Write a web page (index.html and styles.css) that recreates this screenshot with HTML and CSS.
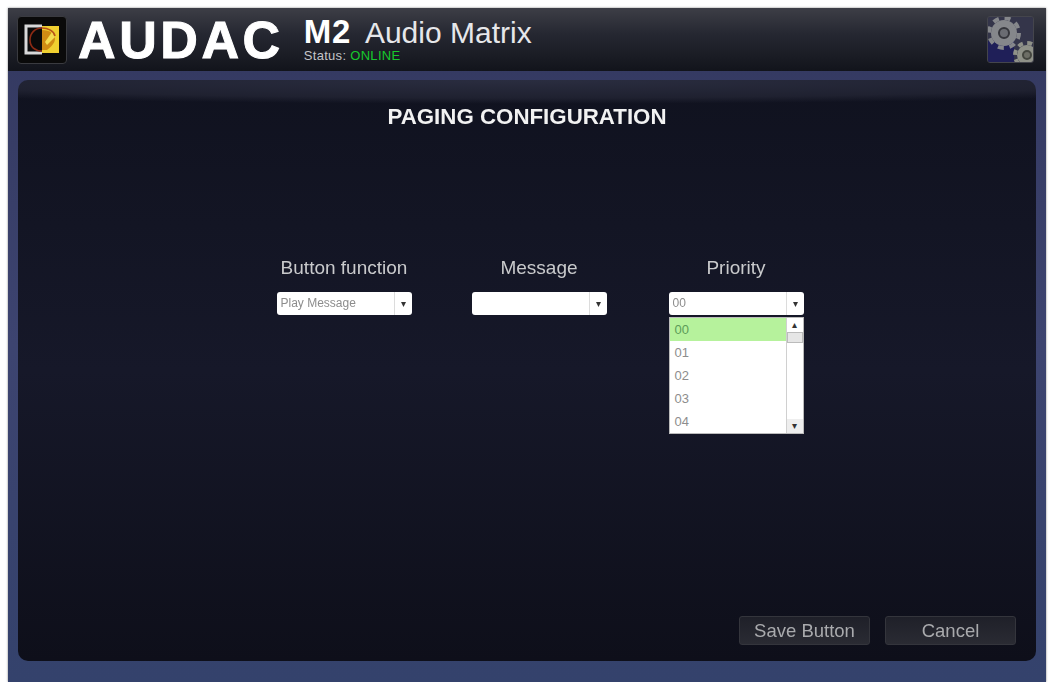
FILE: index.html
```html
<!DOCTYPE html>
<html lang="en">
<head>
  <meta charset="UTF-8" />
  <title>AUDAC M2 Audio Matrix</title>
  <link rel="stylesheet" href="styles.css">
</head>
<body>
  <div class="app">
    <header class="topbar">
      <div class="logo-box">
        <svg width="38" height="34" viewBox="0 0 38 34">
          <path d="M19 3H3v27h16" fill="none" stroke="#d8d8d8" stroke-width="3"/>
          <rect x="19" y="3" width="17" height="27" fill="#f0d030"/>
          <path d="M19 7c8 0 13 4 13 9 0 4-5 9-8 11h-5z" fill="#d08c14"/>
          <path d="M29 9l-7 10 2 3 8-8z" fill="#f4dc50"/>
          <path d="M19 5C12 5 7 10 7 17s5 11 12 11" fill="none" stroke="#8c2a14" stroke-width="1.6"/>
          <path d="M19 5c6 0 12 3 13 8" fill="none" stroke="#b8541a" stroke-width="1.6"/>
        </svg>
      </div>
      <div class="brand">AUDAC</div>
      <div class="product">
        <div class="product__name"><b>M2</b> Audio Matrix</div>
        <div class="product__status">Status: <span class="online">ONLINE</span></div>
      </div>
      <div class="settings">
        <svg width="46" height="47" viewBox="0 0 46 47">
          <rect width="46" height="47" fill="#34354a"/>
          <path d="M0 24h26v23H0z" fill="#1f1f58"/>
          <circle cx="16" cy="16" r="13" fill="#85878b"/>
          <circle cx="16" cy="16" r="15" fill="none" stroke="#85878b" stroke-width="4" stroke-dasharray="6 5.8"/>
          <circle cx="16" cy="16" r="5" fill="#6a6c72" stroke="#35363c" stroke-width="2"/>
          <circle cx="39" cy="38" r="10" fill="#8f9188"/>
          <circle cx="39" cy="38" r="12" fill="none" stroke="#8f9188" stroke-width="4" stroke-dasharray="5 4.4"/>
          <circle cx="39" cy="38" r="4" fill="#6d6e66" stroke="#44463f" stroke-width="2"/>
        </svg>
      </div>
    </header>

    <main class="panel">
      <h1 class="panel__title">PAGING CONFIGURATION</h1>

      <div class="fields">
        <div class="field">
          <label class="field__label">Button function</label>
          <div class="select">
            <span class="select__value">Play Message</span>
            <span class="select__arrow">&#9662;</span>
          </div>
        </div>
        <div class="field">
          <label class="field__label">Message</label>
          <div class="select">
            <span class="select__value"></span>
            <span class="select__arrow">&#9662;</span>
          </div>
        </div>
        <div class="field">
          <label class="field__label">Priority</label>
          <div class="select">
            <span class="select__value">00</span>
            <span class="select__arrow">&#9662;</span>
            <div class="dropdown">
              <ul class="dropdown__list">
                <li class="is-selected">00</li>
                <li>01</li>
                <li>02</li>
                <li>03</li>
                <li>04</li>
              </ul>
              <div class="scrollbar">
                <span class="scrollbar__btn">&#9652;</span>
                <span class="scrollbar__thumb"></span>
                <span class="scrollbar__btn scrollbar__btn--end">&#9662;</span>
              </div>
            </div>
          </div>
        </div>
      </div>

      <div class="actions">
        <button class="btn">Save Button</button>
        <button class="btn">Cancel</button>
      </div>
    </main>
  </div>
</body>
</html>
```

FILE: styles.css
```css
body {
  margin: 0;
  background: #fff;
  font-family: "Liberation Sans", Arial, sans-serif;
}

.app {
  width: 1038px;
  height: 674px;
  margin: 8px 0 0 8px;
  display: flex;
  flex-direction: column;
  background: linear-gradient(#33385f 0, #3d4470 50%, #34426c 100%);
  box-shadow: 0 0 2px rgba(0,0,0,0.5);
  filter: blur(0.7px);
}

/* top bar */
.topbar {
  height: 63px;
  display: flex;
  align-items: center;
  flex-shrink: 0;
  padding: 0 12px 0 9px;
  background: linear-gradient(#3d3e46 0, #262832 40%, #12141b 100%);
}

.logo-box {
  width: 50px;
  height: 48px;
  display: flex;
  align-items: center;
  justify-content: center;
  background: #0a0a0a;
  border: 1px solid #3a3b40;
  border-radius: 4px;
  box-sizing: border-box;
}

.brand {
  margin-left: 11px;
  color: #fff;
  font-size: 52px;
  font-weight: bold;
  letter-spacing: 3.6px;
  line-height: 1;
  -webkit-text-stroke: 1px #fff;
}

.product {
  margin-left: 20px;
  color: #e6e7ea;
}
.product__name {
  font-size: 30px;
  line-height: 29px;
  white-space: nowrap;
}
.product__name b {
  color: #fff;
  font-size: 33px;
  line-height: 1px;
  letter-spacing: 0.8px;
  margin-right: 7px;
}
.product__status {
  margin-top: 2px;
  font-size: 13px;
  line-height: 13px;
  color: #c4c5c9;
  letter-spacing: 0.3px;
}
.online {
  color: #17c92c;
}

.settings {
  margin-left: auto;
  width: 47px;
  height: 47px;
  border: 1px solid #44454c;
  border-radius: 3px;
  overflow: hidden;
  box-sizing: border-box;
}
.settings svg {
  display: block;
}

/* main panel */
.panel {
  position: relative;
  flex: 1;
  margin: 9px 10px 21px;
  display: flex;
  flex-direction: column;
  align-items: center;
  border-radius: 10px;
  background:
    radial-gradient(ellipse 80% 24px at 50% 0, #2a2d40 0, #1f2130 75%, transparent 100%),
    linear-gradient(#10121f 0, #161829 50%, #0e0f1a 100%);
}

.panel__title {
  margin: 24px 0 0;
  color: #f2f2f2;
  font-size: 22.3px;
  font-weight: bold;
  line-height: 26px;
}

.fields {
  display: flex;
  margin-top: 127px;
  margin-left: 26px;
  gap: 60px;
}

.field {
  width: 135px;
  display: flex;
  flex-direction: column;
  align-items: stretch;
}
.field:last-child {
  margin-left: 2px;
}

.field__label {
  color: #c9cacc;
  font-size: 19px;
  line-height: 22px;
  text-align: center;
  margin-bottom: 13px;
  white-space: nowrap;
}

/* fake combo box */
.select {
  position: relative;
  height: 23px;
  display: flex;
  background: #fff;
  border-radius: 3px;
}
.select__value {
  flex: 1;
  padding-left: 4px;
  color: #8c8c8c;
  font-size: 12px;
  line-height: 23px;
}
.select__arrow {
  width: 17px;
  border-left: 1px solid #dcdcdc;
  color: #333;
  font-size: 10px;
  line-height: 23px;
  text-align: center;
}

.dropdown {
  position: absolute;
  top: 25px;
  left: 0;
  width: 135px;
  height: 117px;
  display: flex;
  background: #fff;
  border: 1px solid #bbb;
  box-sizing: border-box;
}
.dropdown__list {
  flex: 1;
  margin: 0;
  padding: 0;
  list-style: none;
}
.dropdown__list li {
  height: 23px;
  padding-left: 5px;
  color: #8d8d8d;
  font-size: 13px;
  line-height: 23px;
}
.dropdown__list .is-selected {
  background: #b6f29c;
  color: #5c9c58;
}

.scrollbar {
  width: 16px;
  display: flex;
  flex-direction: column;
  border-left: 1px solid #d0d0d0;
}
.scrollbar__btn {
  height: 14px;
  color: #333;
  font-size: 10px;
  line-height: 14px;
  text-align: center;
}
.scrollbar__btn--end {
  margin-top: auto;
  background: #eee;
}
.scrollbar__thumb {
  height: 11px;
  background: #e6e6e6;
  border: 1px solid #bbb;
  box-sizing: border-box;
}

/* bottom buttons */
.actions {
  margin-top: auto;
  align-self: flex-end;
  display: flex;
  gap: 15px;
  margin-right: 20px;
  margin-bottom: 16px;
}
.btn {
  width: 131px;
  height: 29px;
  padding: 0;
  color: #a9aaad;
  font-family: inherit;
  font-size: 18.5px;
  background: linear-gradient(#1f2029, #2a2b33);
  border: 1px solid #34353c;
  border-radius: 3px;
}
```
